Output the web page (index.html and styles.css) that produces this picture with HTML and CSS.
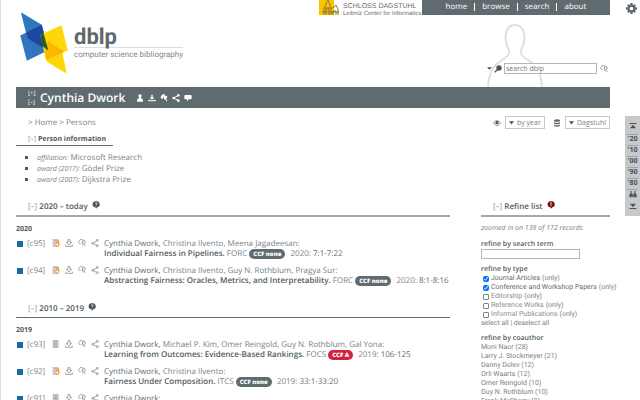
FILE: index.html
```html
<!DOCTYPE html>
<html lang="en">

<head>
    <meta charset="UTF-8">
    <meta name="viewport" content="width=device-width, initial-scale=1.0">
    <title>dblp: Cynthia Dwork</title>
    <link rel="stylesheet" href="styles.css">
</head>
<body>
    <!-- shared icons -->
    <svg class="sprite" aria-hidden="true">
        <symbol id="i-doc" viewBox="0 0 24 24"><path d="M4 1h14v22H4z" fill="#e4e4e4" stroke="#8a8f92" stroke-width="2"/><path d="M7 6h8M7 10h8M7 14h8M7 18h8" stroke="#777c80" stroke-width="2"/></symbol>
        <symbol id="i-open" viewBox="0 0 24 24"><path d="M3 1h15v22H3z" fill="#eee" stroke="#a5a5a5" stroke-width="2"/><path d="M6 5h8M6 10h3M6 14h3M6 18h3" stroke="#888" stroke-width="2"/><path d="M12 11V9a4 4 0 0 1 8 0v9" fill="none" stroke="#f68212" stroke-width="3"/><circle cx="16" cy="17" r="5" fill="#fff" stroke="#f68212" stroke-width="3"/></symbol>
        <symbol id="i-down" viewBox="0 0 24 24"><path d="M9 2h6v8h5l-8 8-8-8h5zM2 17v5h20v-5" fill="none" stroke="#73797d" stroke-width="2"/></symbol>
        <symbol id="i-ask" viewBox="0 0 24 24"><path d="M8 14H6a5 5 0 0 1-2-9 6 6 0 0 1 10-2 5 5 0 0 1 5 2M12 9q0-4 5-4t5 4-5 5l5 7M12 9l3 3-4 1M15 14v5" fill="none" stroke="#73797d" stroke-width="2"/></symbol>
        <symbol id="i-share" viewBox="0 0 24 24"><path d="M6 13 18 5M6 13l12 7" stroke="#73797d" stroke-width="2"/><g fill="#fff" stroke="#73797d" stroke-width="2"><circle cx="5" cy="13" r="3"/><circle cx="19" cy="4" r="3"/><circle cx="19" cy="20" r="3"/></g></symbol>
        <symbol id="i-help" viewBox="0 0 24 24"><path d="M12 1a9 9 0 0 1 4 18l-4 4-2-4A9 9 0 0 1 12 1z" fill="currentColor"/><path d="M9 7q3-4 6-1t-3 5v2M12 15v2" fill="none" stroke="#fff" stroke-width="2"/></symbol>
        <symbol id="i-person" viewBox="0 0 24 24"><path d="M12 1a5 5 0 0 1 4 7l-2 4c6 1 7 4 7 11H3c0-7 1-10 7-11L8 8a5 5 0 0 1 4-7z" fill="currentColor"/></symbol>
        <symbol id="i-top" viewBox="0 0 24 24"><path d="M2 3h20v3H2zM12 8l9 11H3z" fill="currentColor"/></symbol>
    </svg>

    <header class="header">
        <a class="logo" href="#" aria-label="dblp home">
            <svg class="logo-mark" viewBox="60 36 144 188">
                <path d="M62 37 125 75 145 155 82 118z" fill="#2f76bf"/>
                <path d="M60 107 125 75 145 152 80 184z" fill="#2f76bf"/>
                <path d="M78 98 125 75 145 155 84 117z" fill="#1d48a1"/>
                <path d="M120 106 185 76 204 152 138 182z" fill="#fdd708"/>
                <path d="M123 108 186 151 201 223 141 187z" fill="#fdd708"/>
                <path d="M134 146 145 124 187 152 193 157 139 182z" fill="#fab900"/>
                <path d="M120 106 131 101 145 153 126 138z" fill="#2c5b28"/>
            </svg>
            <span class="logo-text">
                <span class="logo-name">dblp</span>
                <span class="logo-sub">computer science bibliography</span>
            </span>
        </a>
        <div class="header-right">
            <div class="topbar">
                <a class="dagstuhl" href="#">
                    <svg viewBox="0 0 24 15"><path d="M0 0h15v15H0z" fill="#fbc400"/><path d="M5 15V8l2-3V3l2-3 2 5v3h3l3-3 2 4v6M7 15V9h3v6M5 8h6M14 15v-4h3v4M12 8v7M3 12h17" fill="none" stroke="#8c752c"/></svg>
                    <span>
                        <span class="dag-name">SCHLOSS DAGSTUHL</span>
                        <span class="dag-sub">Leibniz Center for Informatics</span>
                    </span>
                </a>
                <nav class="topnav">
                    <a href="#">home</a>
                    <a href="#">browse</a>
                    <a href="#">search</a>
                    <a href="#">about</a>
                </nav>
            </div>
            <svg class="silhouette" viewBox="0 0 58 64" fill="none" stroke="#dedfe0" stroke-width="2"><path d="M2 64C3 49 7 43 16 37s8-8 6-12C17 14 20 2 29 2s12 12 7 23c-2 4-3 6 6 12s13 12 14 27"/></svg>
            <form class="search">
                <svg class="caret" viewBox="0 0 8 8"><path d="M0 2h8L4 6z" fill="#49535a"/></svg>
                <svg class="icon" viewBox="0 0 24 24"><path d="M2 22 10 14" stroke="#49535a" stroke-width="4"/><circle cx="15" cy="9" r="8" fill="#49535a"/></svg>
                <input class="search-box" type="text" aria-label="search dblp" placeholder="search dblp">
                <svg class="icon ask"><use href="#i-ask"/></svg>
            </form>
        </div>
    </header>

    <div class="headline">
        <span class="toggles"><a href="#">[+]</a><a href="#">[–]</a></span>
        <h1>Cynthia Dwork</h1>
        <span class="head-icons">
            <svg class="icon"><use href="#i-person"/></svg>
            <svg class="icon" viewBox="0 0 24 24"><path d="M10 2h4v8h5l-7 7-7-7h5zM1 17h4v2h14v-2h4v5H1z" fill="#fff"/></svg>
            <svg class="icon" viewBox="0 0 24 24"><path d="M8 15a6 6 0 0 1-4-10 7 7 0 0 1 12-2l-5 6zM12 9q0-4 5-4t5 4-4 5l5 7-3 1-5-7-3 2z" fill="#fff"/></svg>
            <svg class="icon" viewBox="0 0 24 24"><path d="M5 12 19 4M5 12l14 8" stroke="#fff" stroke-width="3"/><g fill="#fff"><circle cx="5" cy="12" r="4"/><circle cx="19" cy="4" r="4"/><circle cx="19" cy="20" r="4"/></g></svg>
            <svg class="icon" viewBox="0 0 24 24"><path d="M4 3h16q3 0 3 3v7q0 3-3 3h-6l-5 6v-6H4q-3 0-3-3V6q0-3 3-3z" fill="#fff"/></svg>
        </span>
    </div>

    <div class="crumb-row">
        <nav class="breadcrumb">&gt; <a href="#">Home</a> &gt; <a href="#">Persons</a></nav>
        <div class="options">
            <svg class="icon" viewBox="0 0 24 24"><path d="M1 12q11-15 22 0-11 15-22 0z" fill="#fff" stroke="#606b70" stroke-width="2"/><circle cx="12" cy="11" r="5" fill="#49535a"/></svg>
            <label class="drop">
                <svg class="caret" viewBox="0 0 8 8"><path d="M0 2h8L4 7z" fill="#49535a"/></svg>
                <select class="by-year" aria-label="view">
                    <option>by year</option>
                </select>
            </label>
            <svg class="icon stack" viewBox="0 0 24 24"><path d="M3 3q9-4 18 0v4q-9 3-18 0zM3 10q9 3 18 0v4q-9 3-18 0zM3 17q9 3 18 0v4q-9 4-18 0z" fill="#606b70"/></svg>
            <label class="drop">
                <svg class="caret" viewBox="0 0 8 8"><path d="M0 2h8L4 7z" fill="#49535a"/></svg>
                <select class="server" aria-label="server">
                    <option>Dagstuhl</option>
                </select>
            </label>
        </div>
    </div>

    <section class="person">
        <h2 class="person-title"><a href="#">[–]</a> Person information</h2>
        <ul>
            <li><em>affiliation:</em> Microsoft Research</li>
            <li><em>award (2017):</em> Gödel Prize</li>
            <li><em>award (2007):</em> Dijkstra Prize</li>
        </ul>
    </section>

    <div class="columns">
        <main class="publications">
            <h2 class="section-title thick"><a href="#">[–]</a> 2020 – today <svg class="icon"><use href="#i-help"/></svg></h2>
            <h3 class="year">2020</h3>
            <article class="entry">
                <span class="box"></span>
                <span class="nr">[c95]</span>
                <span class="tools">
                    <svg class="icon"><use href="#i-open"/></svg>
                    <svg class="icon"><use href="#i-down"/></svg>
                    <svg class="icon"><use href="#i-ask"/></svg>
                    <svg class="icon"><use href="#i-share"/></svg>
                </span>
                <cite>
                    <span class="authors"><b>Cynthia Dwork,</b> <a href="#">Christina Ilvento</a>, <a href="#">Meena Jagadeesan</a>:</span>
                    <span class="title">Individual Fairness in Pipelines.</span>
                    <a href="#">FORC</a> <span class="ccf">CCF none</span> <a href="#">2020</a>: <b>7:1-7:22</b>
                </cite>
            </article>
            <article class="entry">
                <span class="box"></span>
                <span class="nr">[c94]</span>
                <span class="tools">
                    <svg class="icon"><use href="#i-open"/></svg>
                    <svg class="icon"><use href="#i-down"/></svg>
                    <svg class="icon"><use href="#i-ask"/></svg>
                    <svg class="icon"><use href="#i-share"/></svg>
                </span>
                <cite>
                    <span class="authors"><b>Cynthia Dwork,</b> <a href="#">Christina Ilvento</a>, <a href="#">Guy N. Rothblum</a>, <a href="#">Pragya Sur</a>:</span>
                    <span class="title">Abstracting Fairness: Oracles, Metrics, and Interpretability.</span>
                    <a href="#">FORC</a> <span class="ccf">CCF none</span> <a href="#">2020</a>: <b>8:1-8:16</b>
                </cite>
            </article>

            <h2 class="section-title"><a href="#">[–]</a> 2010 – 2019 <svg class="icon"><use href="#i-help"/></svg></h2>
            <h3 class="year">2019</h3>
            <article class="entry">
                <span class="box"></span>
                <span class="nr">[c93]</span>
                <span class="tools">
                    <svg class="icon"><use href="#i-doc"/></svg>
                    <svg class="icon"><use href="#i-down"/></svg>
                    <svg class="icon"><use href="#i-ask"/></svg>
                    <svg class="icon"><use href="#i-share"/></svg>
                </span>
                <cite>
                    <span class="authors"><b>Cynthia Dwork,</b> <a href="#">Michael P. Kim</a>, <a href="#">Omer Reingold</a>, <a href="#">Guy N. Rothblum</a>, <a href="#">Gal Yona</a>:</span>
                    <span class="title">Learning from Outcomes: Evidence-Based Rankings.</span>
                    <a href="#">FOCS</a> <span class="ccf ccf-a">CCF A</span> <a href="#">2019</a>: <b>106-125</b>
                </cite>
            </article>
            <article class="entry">
                <span class="box"></span>
                <span class="nr">[c92]</span>
                <span class="tools">
                    <svg class="icon"><use href="#i-open"/></svg>
                    <svg class="icon"><use href="#i-down"/></svg>
                    <svg class="icon"><use href="#i-ask"/></svg>
                    <svg class="icon"><use href="#i-share"/></svg>
                </span>
                <cite>
                    <span class="authors"><b>Cynthia Dwork,</b> <a href="#">Christina Ilvento</a>:</span>
                    <span class="title">Fairness Under Composition.</span>
                    <a href="#">ITCS</a> <span class="ccf">CCF none</span> <a href="#">2019</a>: <b>33:1-33:20</b>
                </cite>
            </article>
            <article class="entry">
                <span class="box"></span>
                <span class="nr">[c91]</span>
                <span class="tools">
                    <svg class="icon"><use href="#i-doc"/></svg>
                    <svg class="icon"><use href="#i-down"/></svg>
                    <svg class="icon"><use href="#i-ask"/></svg>
                    <svg class="icon"><use href="#i-share"/></svg>
                </span>
                <cite>
                    <span class="authors"><b>Cynthia Dwork:</b></span>
                </cite>
            </article>
        </main>

        <aside class="refine">
            <h2 class="section-title thick"><a href="#">[–]</a> Refine list
                <svg class="icon warn" viewBox="0 0 24 24"><path d="M12 1a9 9 0 0 1 4 18l-4 4-2-4A9 9 0 0 1 12 1z" fill="#7d0a12"/><path d="M12 4v7M12 13v3" stroke="#fff" stroke-width="3"/></svg>
            </h2>
            <p class="zoomed">zoomed in on 139 of 172 records</p>
            <div class="group">
                <label class="group-title" for="term">refine by search term</label>
                <input class="term" id="term" type="text">
            </div>
            <div class="group">
                <h3 class="group-title">refine by type</h3>
                <div class="check"><input type="checkbox" id="t1" checked><label for="t1">Journal Articles</label> <a href="#">(only)</a></div>
                <div class="check"><input type="checkbox" id="t2" checked><label for="t2">Conference and Workshop Papers</label> <a href="#">(only)</a></div>
                <div class="check off"><input type="checkbox" id="t3"><label for="t3">Editorship</label> <a href="#">(only)</a></div>
                <div class="check off"><input type="checkbox" id="t4"><label for="t4">Reference Works</label> <a href="#">(only)</a></div>
                <div class="check off"><input type="checkbox" id="t5"><label for="t5">Informal Publications</label> <a href="#">(only)</a></div>
                <div><a href="#">select all</a> | <a href="#">deselect all</a></div>
            </div>
            <div class="group">
                <h3 class="group-title">refine by coauthor</h3>
                <div>Moni Naor (28)</div>
                <div>Larry J. Stockmeyer (21)</div>
                <div>Danny Dolev (12)</div>
                <div>Orli Waarts (12)</div>
                <div>Omer Reingold (10)</div>
                <div>Guy N. Rothblum (10)</div>
                <div>Frank McSherry (8)</div>
            </div>
        </aside>
    </div>

    <!-- floating controls on the right edge -->
    <button class="settings" type="button" aria-label="settings">
        <svg viewBox="0 0 24 24"><g stroke="#5f686d" stroke-width="5"><path d="M12 0v24M0 12h24M4 4l16 16M20 4 4 20"/></g><circle cx="12" cy="12" r="8" fill="#5f686d"/><circle cx="12" cy="12" r="4" fill="#fff"/></svg>
    </button>
    <nav class="sidenav">
        <a href="#" aria-label="top"><svg class="icon"><use href="#i-top"/></svg></a>
        <a href="#">'20</a>
        <a href="#">'10</a>
        <a href="#">'00</a>
        <a href="#">'90</a>
        <a href="#">'80</a>
        <a href="#" aria-label="coauthors"><svg class="icon pair" viewBox="0 0 24 24"><path d="M6 2q4 1 2 8 4 1 4 4 0-3 4-4-2-7 2-8 4 1 2 8 4 2 4 12H0Q0 12 4 10 2 3 6 2zM12 14v8" fill="#49535a" stroke="#c6c8c9"/></svg></a>
        <a href="#" aria-label="bottom"><svg class="icon flip"><use href="#i-top"/></svg></a>
    </nav>
</body>
</html>
```

FILE: styles.css
```css
html {
    scrollbar-width: none;
}

body {
    margin: 0;
    padding: 0 30px 0 15px;
    border-left: 1px solid #dcdcdc;
    background-color: #fff;
    color: #7d8286;
    font-family: "Open Sans", sans-serif;
    font-size: 8px;
    line-height: 10px;
    text-rendering: geometricPrecision;
}

a {
    color: inherit;
    text-decoration: none;
}

h1, h2, h3, p, ul {
    margin: 0;
}

.sprite {
    display: none;
}

.icon {
    width: 8px;
    height: 8px;
    flex: none;
}

.caret {
    width: 5px;
    height: 5px;
    flex: none;
}

/* header */
.header {
    display: flex;
    justify-content: space-between;
    height: 87px;
}

.logo {
    display: flex;
    gap: 6px;
    padding: 12px 0 0 4px;
}

.logo-mark {
    width: 48px;
    height: 62px;
}

.logo-text {
    padding-top: 16px;
    font-family: Roboto, sans-serif;
}

.logo-name {
    display: block;
    border-bottom: 1px solid #ddd;
    color: #5f686d;
    font-size: 22px;
    font-weight: bold;
    line-height: 19px;
}

.logo-sub {
    display: block;
    color: #858a8d;
    line-height: 13px;
}

.header-right {
    position: relative;
    width: 291px;
}

.topbar {
    display: flex;
    height: 15px;
    overflow: hidden;
}

.dagstuhl {
    display: flex;
    flex: 1;
    color: #6d6d6d;
    font-family: "Liberation Sans", sans-serif;
    font-size: 6px;
}

.dagstuhl svg {
    width: 24px;
    height: 15px;
}

.dag-name, .dag-sub {
    display: block;
    white-space: nowrap;
}

.dag-name {
    padding-top: 3px;
    font-size: 7px;
    line-height: 7px;
}

.dag-sub {
    line-height: 8px;
}

.topnav {
    display: flex;
    align-items: center;
    justify-content: center;
    box-sizing: border-box;
    width: 188px;
    padding-bottom: 2px;
    background-color: #606b70;
    color: #fff;
    line-height: 8px;
}

.topnav a {
    padding: 0 7px;
}

.topnav a + a {
    border-left: 1px solid #fff;
}

.silhouette {
    position: absolute;
    right: 66px;
    bottom: 0;
    width: 58px;
    height: 64px;
}

.search {
    position: relative;
    display: flex;
    align-items: center;
    justify-content: flex-end;
    gap: 2px;
    padding-top: 48px;
    padding-right: 2px;
}

.search-box {
    box-sizing: border-box;
    width: 93px;
    height: 11px;
    padding: 0 1px;
    border: 1px solid #b5b5b5;
    font: inherit;
    font-size: 7px;
}

.search-box::placeholder {
    color: #757575;
}

.ask {
    margin-left: 1px;
}

/* name bar */
.headline {
    display: flex;
    align-items: center;
    height: 21px;
    padding-left: 12px;
    background-color: #606b70;
    color: #fff;
}

.toggles {
    display: flex;
    flex-direction: column;
    width: 12px;
    font-size: 6px;
    line-height: 9px;
}

.headline h1 {
    font-size: 12px;
    font-weight: 600;
    line-height: 20px;
}

.head-icons {
    display: flex;
    gap: 4px;
    padding-left: 11px;
}

.crumb-row {
    display: flex;
    align-items: center;
    justify-content: space-between;
    padding: 8px 0 0 12px;
}

.options {
    display: flex;
    align-items: center;
    gap: 4px;
}

.stack {
    margin-left: 4px;
}

.drop {
    display: flex;
    align-items: center;
    gap: 3px;
    height: 11px;
    padding: 0 3px;
    border: 1px solid #c8c8c8;
}

.drop select {
    appearance: none;
    margin: 0;
    padding: 0;
    border: 0;
    background: none;
    color: #7d8286;
    font: inherit;
    font-size: 7px;
}

/* person information */
.person {
    padding-top: 6px;
}

.person-title {
    box-sizing: border-box;
    width: 97px;
    padding-left: 12px;
    border-bottom: 1px solid #606b70;
    color: #505a60;
    font-size: 7px;
    font-weight: bold;
    white-space: nowrap;
}

.person-title a, .section-title a {
    color: #8a8f92;
    font-weight: normal;
}

.person ul {
    padding: 7px 0 0 21px;
    list-style-type: square;
}

.person li::marker {
    color: #505a60;
}

.person em {
    font-size: 7px;
}

/* columns */
.columns {
    display: grid;
    grid-template-columns: minmax(0, 1fr) 129px;
    gap: 31px;
    padding-top: 15px;
}

.section-title {
    padding: 0 0 3px 12px;
    border-bottom: 1px solid #606b70;
    color: #505a60;
    font-size: 8px;
    font-weight: 600;
}

.section-title.thick {
    border-bottom: 2px solid #a6a9ab;
}

.entry + .section-title {
    margin-top: 17px;
}

.section-title .icon {
    color: #49535a;
    margin-left: 2px;
}

.year {
    padding: 8px 0 4px;
    color: #505a60;
    font-size: 7px;
    font-weight: bold;
}

.entry {
    display: flex;
    margin-bottom: 7px;
}

.entry:last-child {
    margin-bottom: 0;
}

.box {
    flex: none;
    width: 6px;
    height: 6px;
    margin: 2px 4px 0 1px;
    background-color: #196ca3;
}

.nr {
    flex: none;
    width: 25px;
}

.tools {
    display: flex;
    flex: none;
    gap: 5px;
    width: 52px;
}

.entry cite {
    font-style: normal;
    white-space: nowrap;
}

.entry b {
    color: #666c70;
    font-weight: normal;
}

.authors {
    display: block;
}

.title {
    color: #505a60;
    font-weight: 600;
}

.ccf {
    margin-right: 3px;
    padding: 1px 4px;
    border-radius: 5px;
    background-color: #606b70;
    color: #fff;
    font-size: 6px;
    font-weight: 800;
    line-height: 8px;
}

.ccf-a {
    background-color: #d0233e;
}

/* refine column */
.refine {
    font-family: Roboto, sans-serif;
    font-size: 7px;
    line-height: 9px;
    white-space: nowrap;
}

.refine .section-title {
    font-family: "Open Sans", sans-serif;
    line-height: 10px;
}

.zoomed {
    padding: 7px 0;
    font-family: "Open Sans", sans-serif;
    font-style: italic;
}

.group {
    padding-bottom: 6px;
}

.group-title {
    display: block;
    color: #505a60;
    font-family: "Open Sans", sans-serif;
    font-size: 7px;
    font-weight: 600;
}

.term {
    box-sizing: border-box;
    display: block;
    width: 99px;
    height: 10px;
    padding: 0 2px;
    border: 1px solid #b5b5b5;
    font: inherit;
}

.check {
    display: flex;
    align-items: center;
    gap: 2px;
    height: 9px;
    padding-left: 2px;
}

.check input {
    width: 6px;
    height: 6px;
    margin: 0;
}

.check.off input {
    appearance: none;
    border: 1px solid #858585;
    border-radius: 1px;
}

.check label {
    color: #666c70;
}

.check.off label {
    color: #8a8f92;
}

/* right edge */
.settings {
    position: fixed;
    top: 3px;
    right: 3px;
    width: 11px;
    height: 11px;
    padding: 0;
    border: 0;
    background: none;
}

.settings svg {
    display: block;
}

.sidenav {
    position: fixed;
    top: 116px;
    right: 0;
    display: flex;
    flex-direction: column;
    box-sizing: border-box;
    width: 15px;
    height: 100px;
    padding: 6px 2px;
    background-color: #c6c8c9;
    color: #49535a;
    font-size: 7px;
    font-weight: bold;
    text-align: center;
}

.sidenav a {
    flex: 1;
}

.sidenav a:nth-child(-n+6) {
    border-bottom: 1px solid #a0a4a6;
}

.flip {
    transform: rotate(180deg);
}
```
